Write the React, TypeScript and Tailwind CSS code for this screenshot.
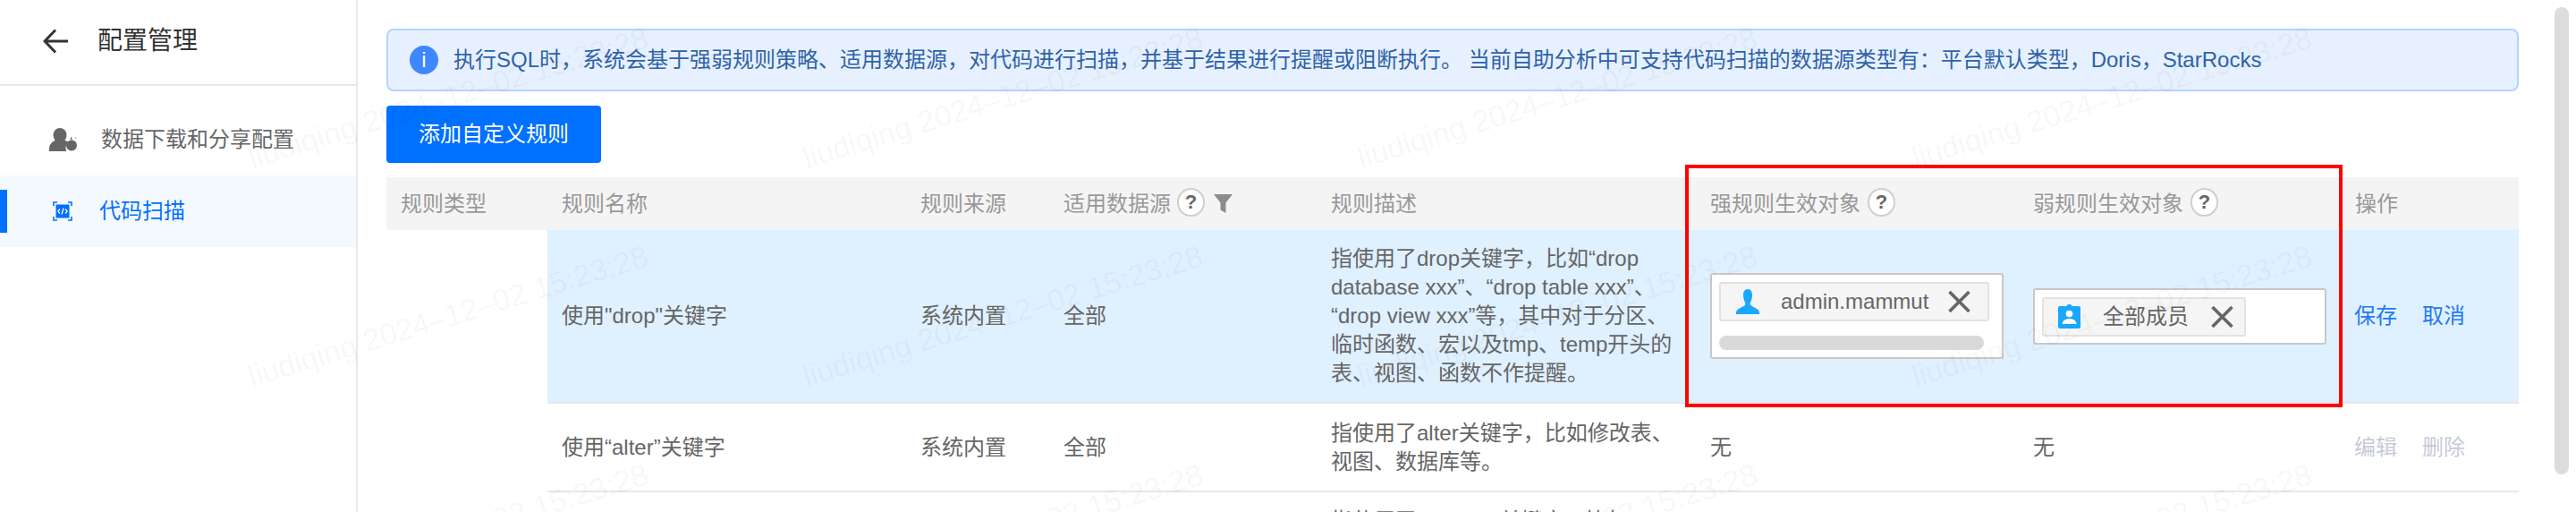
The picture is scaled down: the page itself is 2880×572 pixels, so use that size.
import React from "react";

const cols = "grid grid-cols-[180px_401px_160px_299px_424px_361px_360px_199px]";
const rowCols = "grid grid-cols-[401px_160px_299px_424px_361px_360px_199px]";

function Help() {
  return (
    <span className="inline-flex w-[31px] h-[32px] shrink-0 items-center justify-center rounded-full border-2 border-[#cfcfcf] bg-white text-[22px] font-bold leading-none text-[#666] -translate-y-[2px] font-['Liberation_Sans',sans-serif]">
      ?
    </span>
  );
}

function Close({ className }: { className: string }) {
  return (
    <svg viewBox="0 0 25 24" className={className} fill="none" stroke="#666" strokeWidth="3.6">
      <path d="M1.5 1 23.5 23M23.5 1 1.5 23" />
    </svg>
  );
}

function Head({ children, className = "" }: { children: React.ReactNode; className?: string }) {
  return <div className={`flex items-center pl-4 ${className}`}>{children}</div>;
}

const watermarkCols = [284, 904, 1524, 2144];
const watermarkRows = [195, 439, 683];

function Watermarks() {
  return (
    <div className="absolute inset-0 overflow-hidden pointer-events-none">
      {watermarkRows.flatMap((top) =>
        watermarkCols.map((left) => (
          <div
            key={`${left}-${top}`}
            className="absolute origin-bottom-left -rotate-[17deg]"
            style={{ left, top: top - 78 }}
          >
            <div className="whitespace-nowrap text-[48px] leading-[48px] text-black/[0.018] ml-[50px] -mb-[8px]">PC-049162</div>
            <div className="whitespace-nowrap text-[34px] leading-[38px] text-black/[0.04]">liudiqing 2024–12–02 15:23:28</div>
          </div>
        ))
      )}
    </div>
  );
}

export default function App() {
  return (
    <div className="relative flex h-[572px] w-[2880px] overflow-hidden bg-white font-['Liberation_Sans','Noto_Sans_CJK_SC',sans-serif] text-[24px] leading-8 text-[#666]">
      <aside className="w-[400px] shrink-0 border-r-2 border-[#e8e8ee]">
        <div className="flex h-[96px] items-center border-b-2 border-[#e8e8ee] pl-[48px] pb-[2px]">
          <svg viewBox="0 0 28 28" className="h-[28px] w-[28px]" fill="none" stroke="#333" strokeWidth="3">
            <path d="M28 14H2M14 1.5 2 14l12 12.5" />
          </svg>
          <span className="ml-[33px] text-[28px] leading-9 text-[#333]">配置管理</span>
        </div>
        <nav className="pt-5">
          <div className="flex h-[80px] items-center pl-[55px]">
            <svg viewBox="0 0 31 26" className="h-[26px] w-[31px]" fill="#666">
              <ellipse cx="12" cy="8" rx="7.500" ry="8" />
              <path d="M0 26v-3c0-5 4-8 7-9.500h10c2 .5 3.500 1.500 4.500 3-3 2-4 6-2 9.500z" />
              <circle cx="25" cy="19.500" r="6" />
              <path d="M23.500 13 24.500 9.500 26 13zM29 11l2-1-1.500 2z" />
            </svg>
            <span className="ml-[27px]">数据下载和分享配置</span>
          </div>
          <div className="relative flex h-[80px] items-center bg-[#f4f8ff] pl-[59px] text-[#0070ff]">
            <div className="absolute left-0 top-4 h-12 w-2 bg-[#0070ff]" />
            <svg viewBox="0 0 22 22" className="h-[22px] w-[22px]" fill="none">
              <path d="M5 1H1v4M17 1h4v4M1 17v4h4M21 17v4h-4" stroke="#0070ff" strokeWidth="1.600" />
              <rect x="3.500" y="3.500" width="15" height="15" fill="#0070ff" />
              <path d="M8 8.500 5.800 11 8 13.500M14 8.500l2.200 2.500-2.200 2.500M12 7.500 10 14.500" stroke="#fff" strokeWidth="1.200" />
            </svg>
            <span className="ml-[30px]">代码扫描</span>
          </div>
        </nav>
      </aside>

      <main className="flex-1 pl-8 pr-[64px] pt-8 min-w-0">
        <div className="flex h-[70px] items-center rounded-lg border-2 border-[#b3d4ff] bg-[#e6f0ff] pl-[24px] text-[#2f62a8]">
          <span className="flex h-8 w-8 shrink-0 items-center justify-center rounded-full bg-[#3f86ff] text-[24px] leading-none text-white">i</span>
          <span className="ml-[17px] whitespace-nowrap">
            执行SQL时，系统会基于强弱规则策略、适用数据源，对代码进行扫描，并基于结果进行提醒或阻断执行。 当前自助分析中可支持代码扫描的数据源类型有：平台默认类型，Doris，StarRocks
          </span>
        </div>

        <button className="mt-4 flex h-[64px] w-[240px] items-center justify-center rounded bg-[#0070ff] text-white">
          添加自定义规则
        </button>

        <div className={`${cols} mt-4 h-[59px] bg-[#f4f4f4] text-[#999]`}>
          <Head>规则类型</Head>
          <Head>规则名称</Head>
          <Head>规则来源</Head>
          <Head>
            适用数据源
            <span className="ml-[7px] flex"><Help /></span>
            <svg viewBox="0 0 21 21" className="ml-[10px] h-[21px] w-[21px]" fill="#8c8c8c">
              <path d="M0 0h21l-7.500 9.500V21l-6-3.500V9.500z" />
            </svg>
          </Head>
          <Head>规则描述</Head>
          <Head>
            强规则生效对象
            <span className="ml-2 flex"><Help /></span>
          </Head>
          <Head>
            弱规则生效对象
            <span className="ml-2 flex"><Help /></span>
          </Head>
          <Head>操作</Head>
        </div>

        <div className="ml-[180px]">
          <div className={`${rowCols} h-[194px] items-center border-b-2 border-[#e5e7ee] bg-[#dff0ff]`}>
            <div className="pl-4">使用"drop"关键字</div>
            <div className="pl-4">系统内置</div>
            <div className="pl-4">全部</div>
            <div className="whitespace-nowrap pl-4">
              <div>指使用了drop关键字，比如“drop</div>
              <div>database xxx”、“drop table xxx”、</div>
              <div>“drop view xxx”等，其中对于分区、</div>
              <div>临时函数、宏以及tmp、temp开头的</div>
              <div>表、视图、函数不作提醒。</div>
            </div>
            <div className="pl-4">
              <div className="h-[96px] w-[328px] rounded-[3px] border-2 border-[#c8c8c8] bg-white pl-2 pt-2">
                <div className="flex h-[44px] w-[302px] items-center rounded-[3px] border-2 border-[#e2e2e2] bg-[#f5f5f5] pl-[16px]">
                  <svg viewBox="0 0 28 28" className="h-[28px] w-[28px]" fill="#1aa7ff">
                    <path d="M14 0c3.500 0 5 3 5 7s-1.500 7-2.500 9c0 3 5 4 9 7 1.500 1.500 1.500 3 1.500 5H1c0-2 0-3.500 1.500-5 4-3 9-4 9-7-1-2-2.500-5-2.500-9s1.500-7 5-7z" />
                  </svg>
                  <span className="ml-[23px] whitespace-nowrap">admin.mammut</span>
                  <Close className="ml-[22px] h-[24px] w-[25px]" />
                </div>
                <div className="mt-4 h-4 w-[296px] rounded-full bg-[#d9d9d9]" />
              </div>
            </div>
            <div className="pl-4">
              <div className="h-[63px] w-[328px] rounded-[3px] border-2 border-[#c8c8c8] bg-white pl-2 pt-2">
                <div className="flex h-[44px] w-[228px] items-center rounded-[3px] border-2 border-[#e2e2e2] bg-[#f5f5f5] pl-[16px]">
                  <svg viewBox="0 0 25 27" className="h-[27px] w-[25px]" fill="#1aa7ff">
                    <path d="M2 2h7.500c.5-1.500 1.500-2 3-2s2.500.5 3 2H23a2 2 0 0 1 2 2v21a2 2 0 0 1-2 2H2a2 2 0 0 1-2-2V4a2 2 0 0 1 2-2z" />
                    <circle cx="12.500" cy="10.500" r="3.800" fill="#fff" />
                    <path d="M4.500 22c0-3.500 3.500-6 8-6s8 2.500 8 6z" fill="#fff" />
                  </svg>
                  <span className="ml-[25px] whitespace-nowrap">全部成员</span>
                  <Close className="ml-[25px] h-[24px] w-[25px]" />
                </div>
              </div>
            </div>
            <div className="flex gap-[28px] pl-[15px] text-[#1f7bf0]">
              <span>保存</span>
              <span>取消</span>
            </div>
          </div>

          <div className={`${rowCols} h-[99px] items-center border-b-2 border-[#e5e7ee]`}>
            <div className="pl-4">使用“alter”关键字</div>
            <div className="pl-4">系统内置</div>
            <div className="pl-4">全部</div>
            <div className="whitespace-nowrap pl-4">
              <div>指使用了alter关键字，比如修改表、</div>
              <div>视图、数据库等。</div>
            </div>
            <div className="pl-4">无</div>
            <div className="pl-4">无</div>
            <div className="flex gap-[28px] pl-[15px] text-[#c6cbd6]">
              <span>编辑</span>
              <span>删除</span>
            </div>
          </div>

          <div className={`${rowCols} pt-4`}>
            <div className="pl-4" />
            <div className="pl-4" />
            <div className="pl-4" />
            <div className="whitespace-nowrap pl-4">
              指使用了<span className="inline-block w-[93px]">rename</span>关键字，比如
            </div>
          </div>
        </div>
      </main>

      <Watermarks />
      <div className="absolute left-[1884px] top-[184px] h-[271px] w-[735px] border-4 border-[#ff0000] pointer-events-none" />
      <div className="absolute left-[2856px] top-[8px] h-[522px] w-[16px] rounded-full bg-[#dcdcdc]" />
    </div>
  );
}
